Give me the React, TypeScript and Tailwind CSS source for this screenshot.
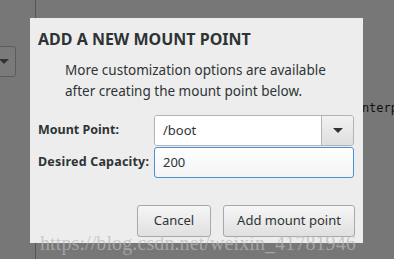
import React from "react";

const ui = { fontFamily: '"Noto Sans", "Open Sans", sans-serif' };

function Arrow() {
  return (
    <svg width="10" height="6" viewBox="0 0 10 6">
      <path d="M0 0 L10 0 L5 5 Z" fill="#2e3436" />
    </svg>
  );
}

export default function App() {
  return (
    <div className="relative w-[394px] h-[259px] overflow-hidden bg-[#777777]" style={ui}>
      {/* background window */}
      <div className="flex h-full">
        <div className="w-[35px] shrink-0 pt-[46px]">
          <div className="-ml-[10px] w-[26px] h-[31px] rounded-[3px] border border-[#5c5c5c] bg-[#7a7a7a] flex items-center pl-[8px]">
            <Arrow />
          </div>
        </div>
        <div className="w-px bg-[#555555] shrink-0" />
        <div className="flex-1 flex justify-end pt-[101px]">
          <span className="text-[12px] text-[#111111] leading-[14px] -mr-[4px]" style={{ fontFamily: '"DejaVu Sans Mono", monospace' }}>
            nterp
          </span>
        </div>
      </div>

      {/* dialog */}
      <div className="absolute left-[30px] top-[18px] w-[333px] h-[225px] bg-[#ededed] flex flex-col">
        <div className="pl-[8px] pt-[10px] text-[16px] font-bold text-[#2e3436] leading-[22px]">
          ADD A NEW MOUNT POINT
        </div>
        <div className="pl-[35px] pt-[10px] text-[13.5px] text-[#2e3436] leading-[21px]">
          More customization options are available
          <br />
          after creating the mount point below.
        </div>
        <div className="grid grid-cols-[116px_200px] gap-y-[1px] pl-[8px] pt-[13px] items-center">
          <span className="text-[12.5px] font-bold text-[#2e3436]">Mount Point:</span>
          <div className="h-[31px] flex rounded-[3px] border border-[#b3b3b0] overflow-hidden">
            <div className="flex-1 bg-white flex items-center pl-[8px] text-[13px] text-[#2e3436]">/boot</div>
            <div className="w-[32px] border-l border-[#b3b3b0] bg-gradient-to-b from-[#f2f2f2] to-[#dedede] flex items-center justify-center">
              <Arrow />
            </div>
          </div>
          <span className="text-[12.5px] font-bold text-[#2e3436] tracking-[0.2px]">Desired Capacity:</span>
          <div className="h-[31px] rounded-[3px] border border-[#4a90d9] bg-gradient-to-b from-white to-[#f4f4f4] flex items-center pl-[8px] text-[13px] text-[#2e3436]">
            200
          </div>
        </div>
        <div className="flex justify-end gap-[12px] pr-[8px] pt-[27px]">
          <button className="w-[74px] h-[32px] rounded-[3px] border border-[#a8a8a8] bg-gradient-to-b from-[#f6f6f6] to-[#e0e0e0] text-[13px] text-[#2e3436]">
            Cancel
          </button>
          <button className="w-[132px] h-[32px] rounded-[3px] border border-[#a8a8a8] bg-gradient-to-b from-[#f6f6f6] to-[#e0e0e0] text-[13px] text-[#2e3436]">
            Add mount point
          </button>
        </div>
      </div>

      {/* watermark */}
      <div
        className="absolute left-[40px] top-[231px] text-[20px] leading-[24px] tracking-[0.1px] text-[rgba(185,185,185,0.7)] whitespace-nowrap"
        style={{ fontFamily: '"Liberation Serif", serif' }}
      >
        https://blog.csdn.net/weixin_41781946
      </div>
    </div>
  );
}
